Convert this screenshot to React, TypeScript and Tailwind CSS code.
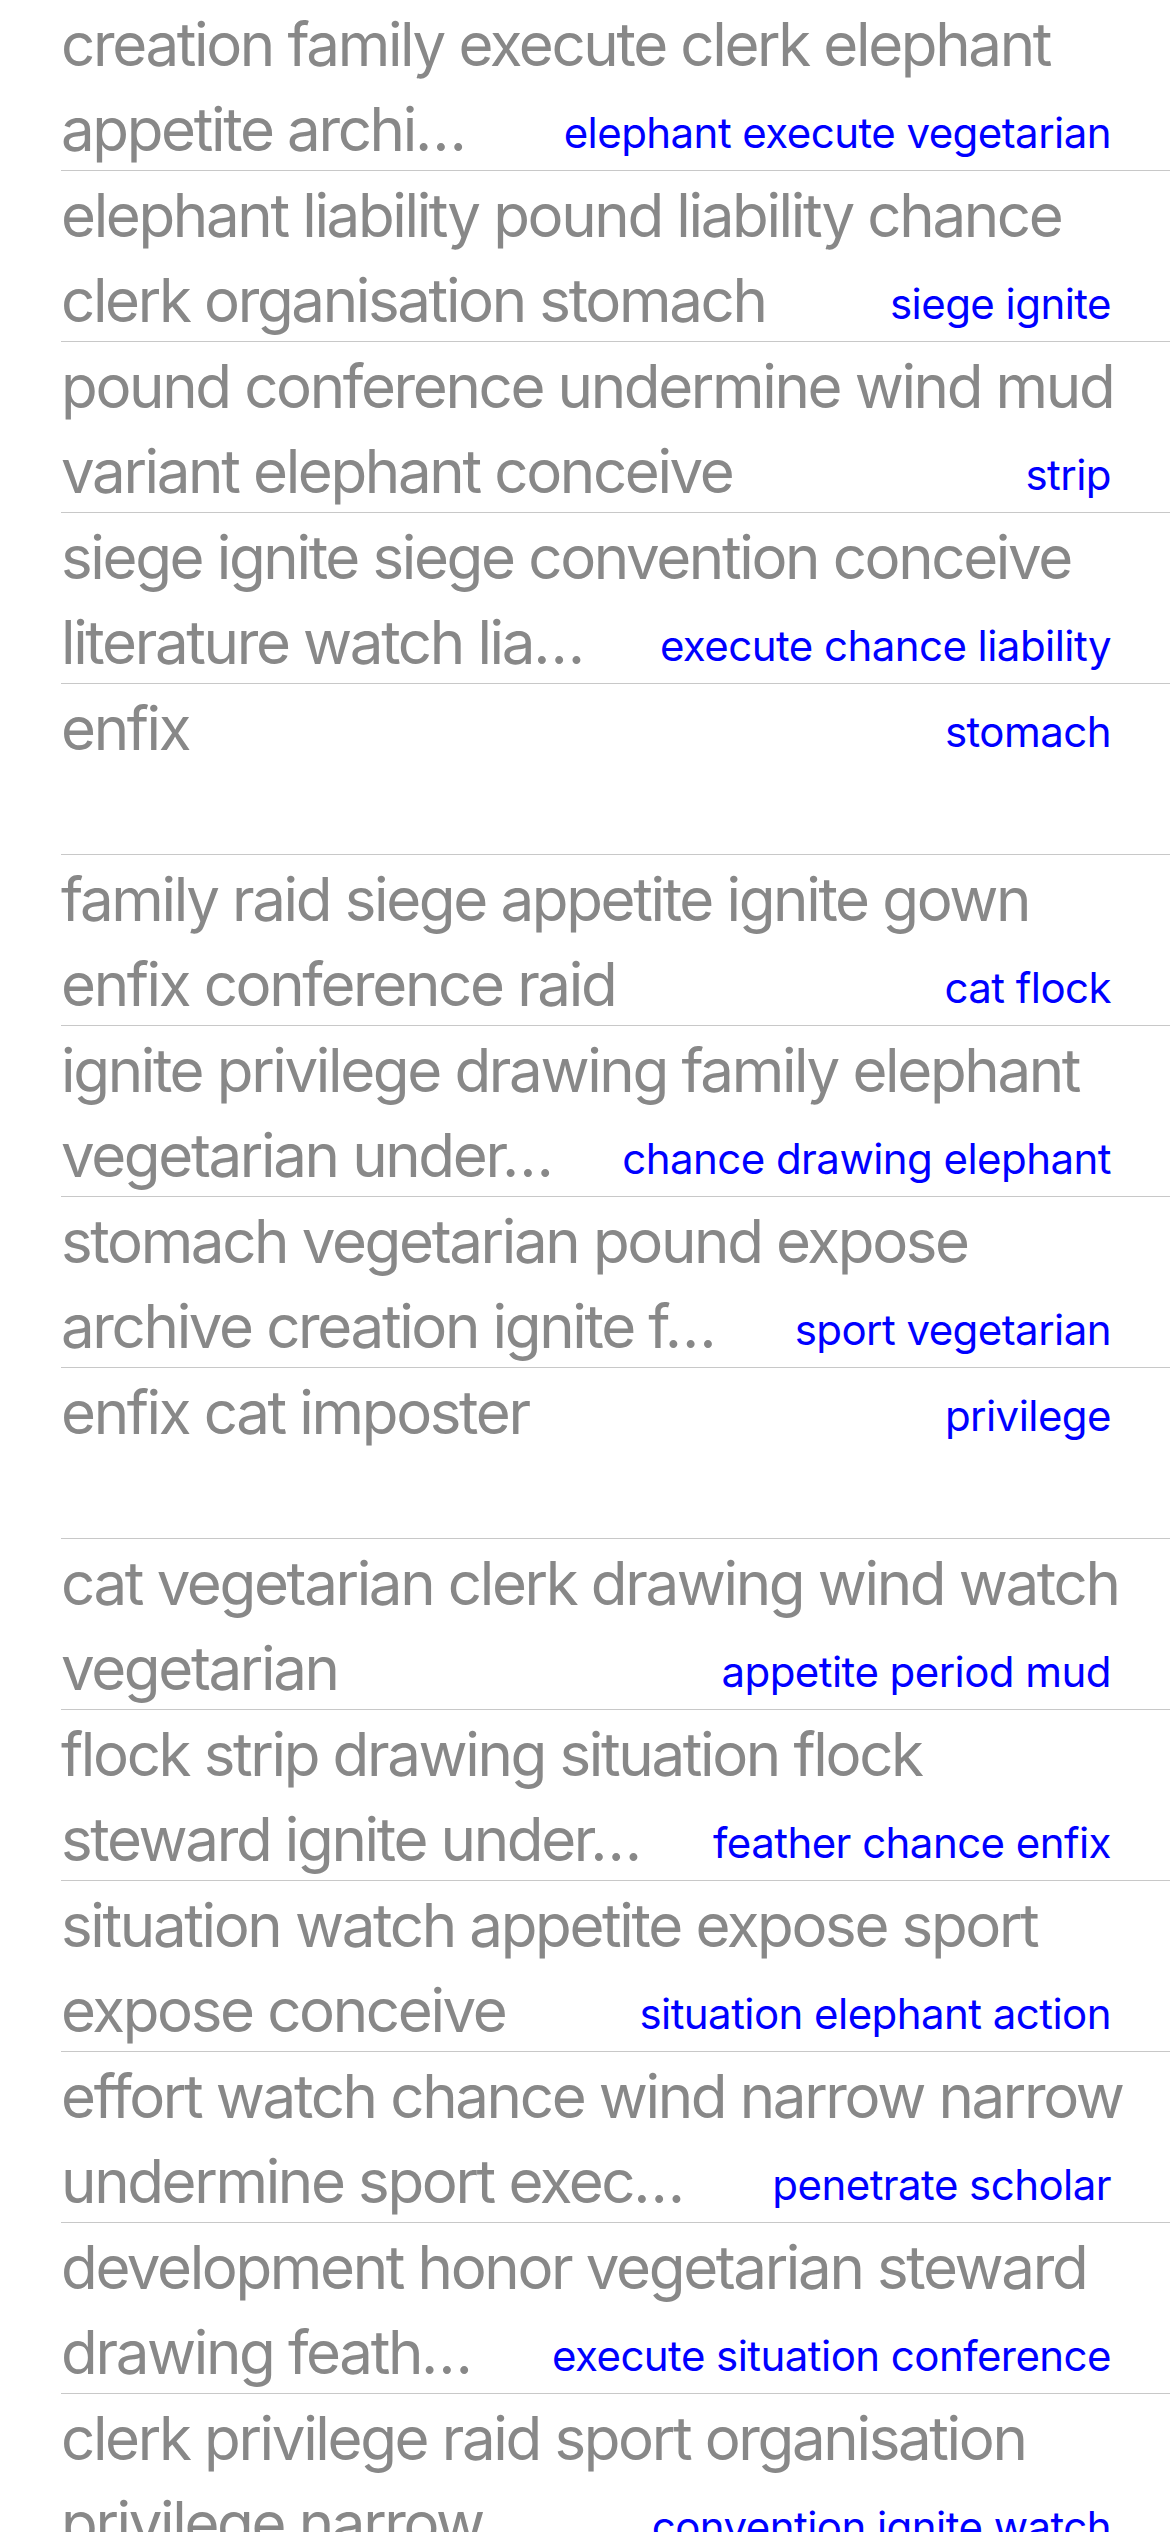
const rows: { lines: string[]; tag: string }[] = [
  { lines: ["creation family execute clerk elephant", "appetite archi…"], tag: "elephant execute vegetarian" },
  { lines: ["elephant liability pound liability chance", "clerk organisation stomach"], tag: "siege ignite" },
  { lines: ["pound conference undermine wind mud", "variant elephant conceive"], tag: "strip" },
  { lines: ["siege ignite siege convention conceive", "literature watch lia…"], tag: "execute chance liability" },
  { lines: ["enfix"], tag: "stomach" },
  { lines: ["family raid siege appetite ignite gown", "enfix conference raid"], tag: "cat flock" },
  { lines: ["ignite privilege drawing family elephant", "vegetarian under…"], tag: "chance drawing elephant" },
  { lines: ["stomach vegetarian pound expose", "archive creation ignite f…"], tag: "sport vegetarian" },
  { lines: ["enfix cat imposter"], tag: "privilege" },
  { lines: ["cat vegetarian clerk drawing wind watch", "vegetarian"], tag: "appetite period mud" },
  { lines: ["flock strip drawing situation flock", "steward ignite under…"], tag: "feather chance enfix" },
  { lines: ["situation watch appetite expose sport", "expose conceive"], tag: "situation elephant action" },
  { lines: ["effort watch chance wind narrow narrow", "undermine sport exec…"], tag: "penetrate scholar" },
  { lines: ["development honor vegetarian steward", "drawing feath…"], tag: "execute situation conference" },
  { lines: ["clerk privilege raid sport organisation", "privilege narrow…"], tag: "convention ignite watch" },
]

const Row = ({ lines, tag }: { lines: string[]; tag: string }) => {
  const last = lines[lines.length - 1]
  return (
    <div className="ml-[61px] h-[171px] shrink-0 border-b border-[#c8c8c8] pr-[59px] pt-[2px]">
      <div className="text-[60px] leading-[85px] tracking-[-2.35px] text-[#888888]">
        {lines.slice(0, -1).map((l) => (
          <div key={l} className="whitespace-nowrap">
            {l}
          </div>
        ))}
        <div className="flex items-end justify-between">
          <span className="whitespace-nowrap">{last}</span>
          <span className="shrink-0 whitespace-nowrap text-[42px] leading-[78px] tracking-[-0.55px] text-[#0000ff]">
            {tag}
          </span>
        </div>
      </div>
    </div>
  )
}

export default function App() {
  return (
    <div
      className="flex h-[2532px] w-[1170px] flex-col overflow-hidden bg-white"
      style={{ fontFamily: "Inter, 'Noto Sans', sans-serif" }}
    >
      {rows.map((r, i) => (
        <Row key={i} lines={r.lines} tag={r.tag} />
      ))}
    </div>
  )
}
